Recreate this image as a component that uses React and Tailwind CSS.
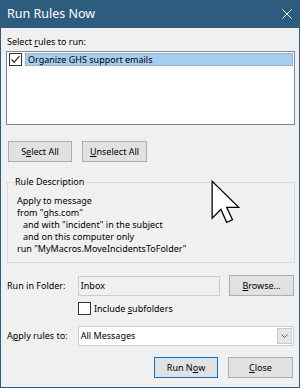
import React from 'react'

const font = { fontFamily: '"Noto Sans", "Liberation Sans", sans-serif' }

function Btn({ children, focused, className = '' }) {
  return (
    <div
      className={`flex items-center justify-center h-[21px] bg-[#e1e1e1] border text-[9px] text-black whitespace-nowrap ${
        focused ? 'border-[#0078d7]' : 'border-[#adadad]'
      } ${className}`}
    >
      {children}
    </div>
  )
}

function Check({ checked }) {
  return (
    <div className="w-[13px] h-[13px] border border-[#333] bg-white flex items-center justify-center shrink-0">
      {checked && (
        <svg width="11" height="11" viewBox="0 0 11 11">
          <path d="M1.5 5.5 L4.2 8.2 L9.5 2.2" fill="none" stroke="#222" strokeWidth="1.2" />
        </svg>
      )}
    </div>
  )
}

export default function App() {
  return (
    <div
      className="relative w-[300px] h-[388px] bg-[#f0f0f0] border-x border-b border-[#2d5c7f] flex flex-col text-[9px] text-black leading-[12px] overflow-hidden whitespace-nowrap"
      style={font}
    >
      {/* title bar */}
      <div className="h-[28px] bg-[#2d5c7f] flex items-center justify-between pl-[7px] pr-[8px] -mx-px shrink-0">
        <span className="text-white text-[12.5px]">Run Rules Now</span>
        <svg width="10" height="10" viewBox="0 0 10 10">
          <path d="M0.5 0.5 L9.5 9.5 M9.5 0.5 L0.5 9.5" stroke="#fff" strokeWidth="1" />
        </svg>
      </div>

      <div className="flex flex-col px-[5px]">
        <div className="mt-[8px] ml-[1px] h-[14px]">
          Select <u>r</u>ules to run:
        </div>
        <div className="mt-px h-[74px] w-[289px] bg-white border border-[#828790] p-px">
          <div className="flex items-center gap-[3px] h-[13px] ml-px">
            <Check checked />
            <div className="flex-1 h-[13px] bg-[#a6cdf0] border border-dotted border-[#7f9db9] flex items-center pl-[2px]">
              Organize GHS support emails
            </div>
          </div>
        </div>

        <div className="flex gap-[10px] mt-[16px] ml-[2px]">
          <Btn className="w-[64px]">
            S<u>e</u>lect All
          </Btn>
          <Btn className="w-[65px]">
            <u>U</u>nselect All
          </Btn>
        </div>

        <div className="relative mt-[20px] ml-px w-[288px] h-[81px] border border-[#dcdcdc]">
          <span className="absolute -top-[7px] left-[6px] bg-[#f0f0f0] px-px">Rule Description</span>
          <div className="pt-[12px] pl-[9px] flex flex-col leading-[12px]">
            <div>Apply to message</div>
            <div>from "ghs.com"</div>
            <div className="pl-[6px]">and with "incident" in the subject</div>
            <div className="pl-[6px]">and on this computer only</div>
            <div>run "MyMacros.MoveIncidentsToFolder"</div>
          </div>
        </div>

        <div className="flex items-center mt-[12px] ml-px">
          <span className="w-[71px]">Run in Folder:</span>
          <div className="w-[143px] h-[20px] bg-[#f0f0f0] border border-[#cccccc] flex items-center pl-[2px]">Inbox</div>
          <Btn className="w-[65px] ml-[9px]">
            <u>B</u>rowse...
          </Btn>
        </div>

        <div className="flex items-center gap-[3px] mt-[6px] ml-[72px] h-[13px]">
          <Check />
          <span>
            Include <u>s</u>ubfolders
          </span>
        </div>

        <div className="flex items-center mt-[11px] ml-px">
          <span className="w-[71px]">
            A<u>p</u>ply rules to:
          </span>
          <div className="w-[217px] h-[20px] bg-white border border-[#cccccc] flex items-center justify-between pl-[2px] pr-px">
            <span>All Messages</span>
            <div className="w-[15px] h-[16px] bg-[#e5e5e5] border border-[#cccccc] flex items-center justify-center">
              <svg width="7" height="4" viewBox="0 0 7 4">
                <path d="M0.5 0.5 L3.5 3.5 L6.5 0.5" fill="none" stroke="#606060" strokeWidth="1" />
              </svg>
            </div>
          </div>
        </div>

        <div className="flex justify-end gap-[10px] mt-[11px] mr-[1px]">
          <Btn focused className="w-[64px]">
            Run N<u>o</u>w
          </Btn>
          <Btn className="w-[65px]">
            <u>C</u>lose
          </Btn>
        </div>
      </div>

      {/* mouse pointer */}
      <svg className="absolute left-[210px] top-[180px]" width="30" height="44" viewBox="0 0 13 19">
        <path
          d="M0.5 0.5 L0.5 16.5 L4.3 12.7 L6.8 18.3 L9.3 17.2 L6.8 11.8 L12 11.8 Z"
          fill="#fff"
          stroke="#000"
          strokeWidth="0.55"
          strokeLinejoin="miter"
        />
      </svg>
    </div>
  )
}
